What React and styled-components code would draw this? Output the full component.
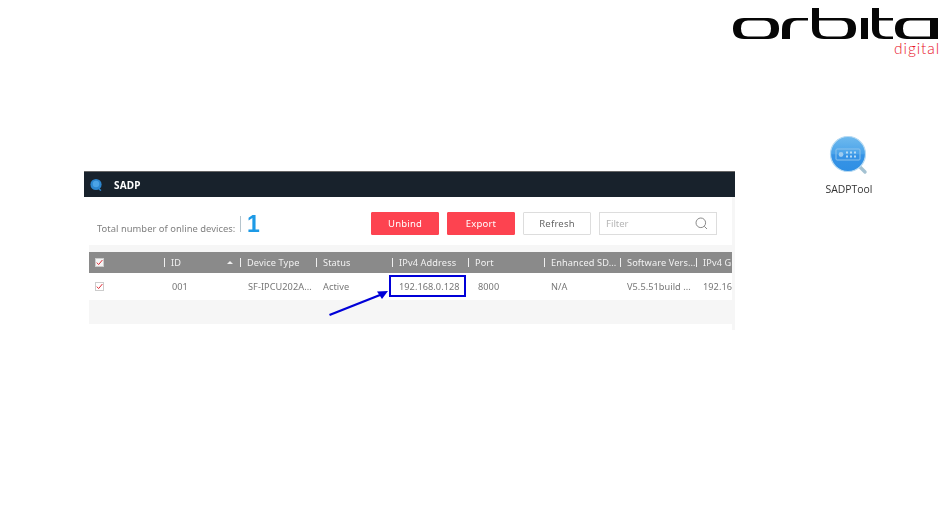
import React from "react";
import styled, { createGlobalStyle } from "styled-components";

const Global = createGlobalStyle`
  html, body { margin: 0; padding: 0; background: #fff; }
  body { font-family: "Noto Sans", "Open Sans", sans-serif; }
`;

const Page = styled.div`
  width: 950px;
  height: 527px;
  overflow: hidden;
  display: flex;
  flex-direction: column;
  background: #fff;
`;
const Header = styled.header`
  height: 135px;
  box-sizing: border-box;
  padding: 5px 10px 0 0;
  display: flex;
  justify-content: flex-end;
  align-items: flex-start;
`;
const Brand = styled.div`
  width: 210px;
  display: flex;
  flex-direction: column;
  align-items: flex-end;
`;
const Digital = styled.span`
  font-family: "Lato", sans-serif;
  font-weight: 300;
  font-size: 15.5px;
  line-height: 16px;
  letter-spacing: 0.9px;
  color: #e8101f;
  margin-top: -1px;
`;
const Main = styled.main`
  display: flex;
  align-items: flex-start;
  padding-left: 84px;
`;
const Panel = styled.section`
  position: relative;
  width: 651px;
  height: 159px;
  margin-top: 36px;
  background: #fff;
  display: flex;
  flex-direction: column;
`;
const Soft = styled.div`
  filter: blur(0.25px);
  display: flex;
  flex-direction: column;
  height: 100%;
`;
const TitleBar = styled.div`
  height: 26px;
  box-sizing: border-box;
  background: #18222c;
  border-top: 1px solid #666;
  display: flex;
  align-items: center;
  padding-left: 6px;
  gap: 12px;
`;
const Title = styled.span`
  color: #fff;
  font-family: "Noto Sans", sans-serif;
  font-weight: 700;
  font-size: 10px;
  letter-spacing: 0.2px;
`;
const Toolbar = styled.div`
  height: 48px;
  box-sizing: border-box;
  padding: 15px 18px 0 13px;
  display: flex;
  align-items: flex-start;
`;
const Total = styled.div`
  display: flex;
  align-items: flex-start;
  width: 274px;
`;
const TotalLabel = styled.span`
  font-size: 9.4px;
  line-height: 14px;
  letter-spacing: 0.03px;
  color: #808080;
  margin-top: 10px;
  white-space: nowrap;
  width: 143px;
`;
const Count = styled.span`
  border-left: 1px solid #b5c4cc;
  height: 16px;
  margin-top: 4px;
  padding-left: 6px;
  font-family: "Liberation Sans", sans-serif;
  font-weight: 700;
  font-size: 23px;
  line-height: 16px;
  color: #1d9ae6;
`;
const Actions = styled.div`
  display: flex;
  gap: 8px;
`;
const Button = styled.div`
  width: 68px;
  height: 23px;
  box-sizing: border-box;
  border-radius: 1px;
  display: flex;
  align-items: center;
  justify-content: center;
  font-size: 9.5px;
  letter-spacing: 0.2px;
  background: ${(p) => (p.$primary ? "#fd4350" : "#fff")};
  color: ${(p) => (p.$primary ? "#fff" : "#666")};
  border: 1px solid ${(p) => (p.$primary ? "#fd4350" : "#ddd")};
`;
const Filter = styled.div`
  width: 118px;
  height: 23px;
  box-sizing: border-box;
  border: 1px solid #ddd;
  display: flex;
  align-items: center;
  justify-content: space-between;
  padding: 0 8px 0 6px;
  font-size: 9.5px;
  color: #b5b5b5;
`;
const TableWrap = styled.div`
  margin-left: 5px;
  width: 644px;
  display: flex;
  flex-direction: column;
  background: #f6f6f6;
  height: 79px;
  overflow: hidden;
`;
const Row = styled.div`
  display: grid;
  grid-template-columns: 75px repeat(8, 76px);
  flex: none;
  width: 683px;
  margin-top: ${(p) => (p.$head ? "7px" : "0")};
  height: ${(p) => (p.$head ? "21px" : "27px")};
  background: ${(p) => (p.$head ? "#8a8a8a" : "#fff")};
`;
const HeadCell = styled.div`
  display: flex;
  align-items: center;
  justify-content: space-between;
  white-space: nowrap;
  overflow: hidden;
  font-size: 9.2px;
  letter-spacing: 0.12px;
  color: #f2f2f2;
  padding: 0 0 0 7px;
  position: relative;
  &::before {
    content: "";
    display: block;
    position: absolute;
    left: 0;
    top: 6px;
    height: 9px;
    width: 1px;
    background: #efefef;
  }
`;
const CheckCell = styled.div`
  display: flex;
  align-items: center;
`;
const Cell = styled.div`
  display: flex;
  align-items: center;
  white-space: nowrap;
  overflow: hidden;
  font-size: 9.2px;
  letter-spacing: 0.05px;
  color: #777;
  padding-left: ${(p) => p.$inset ?? 8}px;
`;
const Check = styled.span`
  width: 9px;
  height: 9px;
  margin-left: 6px;
  box-sizing: border-box;
  background: ${(p) => (p.$head ? "#f4f4f4" : "#fff")};
  border: 1px solid #ccc;
  display: flex;
  align-items: center;
  justify-content: center;
`;
const SortArrow = styled.span`
  width: 0;
  height: 0;
  margin-right: 7px;
  border-left: 3px solid transparent;
  border-right: 3px solid transparent;
  border-bottom: 3px solid #eee;
`;
const Scroll = styled.div`
  position: absolute;
  right: 0;
  top: 26px;
  bottom: 0;
  width: 3px;
  background: #f6f6f6;
`;
const Highlight = styled.div`
  position: absolute;
  left: 305px;
  top: 104px;
  width: 77px;
  height: 22px;
  box-sizing: border-box;
  border: 2px solid #0000d8;
`;
const Arrow = styled.svg`
  position: absolute;
  left: 240px;
  top: 110px;
`;
const Shortcut = styled.div`
  width: 60px;
  margin-left: 84px;
  display: flex;
  flex-direction: column;
  align-items: center;
  gap: 8px;
`;
const ShortcutLabel = styled.span`
  font-family: "Open Sans", sans-serif;
  font-size: 10.4px;
  line-height: 13px;
  color: #333;
  filter: blur(0.2px);
`;

const LogoMark = () => (
  <svg width="210" height="36" viewBox="730 5 210 36" aria-label="orbita">
    <g fill="#060606" fillRule="evenodd">
      <path d="M744 18H768Q779 18 779 28.5Q779 39 768 39H744Q733 39 733 28.5Q733 18 744 18ZM748 20.5Q741 20.5 741 28.5Q741 36.5 748 36.5H764Q771 36.5 771 28.5Q771 20.5 764 20.5Z" />
      <path d="M782 39V29Q782 18 794 18H808V20.5H797Q790 20.5 790 29V39Z" />
      <path d="M812 8H819V18H845Q856 18 856 28.5Q856 39 845 39H824Q812 39 812 28ZM819 20.5V29Q819 36.5 827 36.5H841Q848 36.5 848 28.5Q848 20.5 841 20.5Z" />
      <rect x="861" y="18" width="7" height="21" />
      <path d="M872 8H879V18H893V20.5H879V30Q879 36.5 886 36.5H893V39H884Q872 39 872 29Z" />
      <path d="M938 18V39H907Q895 39 895 28.5Q895 18 907 18ZM930 20.5H910Q903 20.5 903 28.5Q903 36.5 910 36.5H930Z" />
    </g>
  </svg>
);

const AppIcon = () => (
  <svg width="40" height="40" viewBox="0 0 40 40">
    <defs>
      <linearGradient id="lens" x1="0" y1="0" x2="0" y2="1">
        <stop offset="0" stopColor="#6fbaee" />
        <stop offset="0.5" stopColor="#4aa3ea" />
        <stop offset="0.52" stopColor="#3794e6" />
        <stop offset="1" stopColor="#2f8fe4" />
      </linearGradient>
    </defs>
    <path d="M30 31L36 37" stroke="#a4c2d2" strokeWidth="3.4" strokeLinecap="round" />
    <circle cx="19" cy="19" r="17.5" fill="url(#lens)" stroke="#b7daf2" strokeWidth="1.2" />
    <rect x="7" y="14" width="24" height="11" rx="1" fill="none" stroke="#8cc2ec" strokeWidth="1" />
    <circle cx="12" cy="19.5" r="2.4" fill="#9ccbf0" />
    <path d="M17 17.5h2M21 17.5h2M25 17.5h2M17 21.5h2M21 21.5h2M25 21.5h2" stroke="#b7dbf5" strokeWidth="2" />
  </svg>
);

const SmallLogo = () => (
  <svg width="12" height="13" viewBox="0 0 12 13">
    <circle cx="6" cy="6.5" r="5.6" fill="#2c86cf" />
    <path d="M9 11L11 12.5" stroke="#2c86cf" strokeWidth="1.5" />
    <circle cx="6" cy="6" r="3.2" fill="#4ba3e6" />
  </svg>
);

const Tick = () => (
  <svg width="7" height="7" viewBox="0 0 7 7">
    <path d="M.8 3.6L2.6 5.6L6.4 1" fill="none" stroke="#e0303a" strokeWidth="1" />
  </svg>
);

const Search = () => (
  <svg width="13" height="13" viewBox="0 0 13 13">
    <circle cx="5.8" cy="5.8" r="4.8" fill="none" stroke="#7d7d7d" strokeWidth="0.9" />
    <path d="M9.3 9.3L12 12" stroke="#7d7d7d" strokeWidth="0.9" />
  </svg>
);

const heads = ["ID", "Device Type", "Status", "IPv4 Address", "Port", "Enhanced SD...", "Software Vers...", "IPv4 Gateway"];
const cells = [
  { t: "001" },
  { t: "SF-IPCU202A..." },
  { t: "Active", inset: 7 },
  { t: "192.168.0.128", inset: 7 },
  { t: "8000", inset: 10 },
  { t: "N/A", inset: 7 },
  { t: "V5.5.51build ...", inset: 7 },
  { t: "192.168.0.1", inset: 7 },
];

export default function App() {
  return (
    <Page>
      <Global />
      <Header>
        <Brand>
          <LogoMark />
          <Digital>digital</Digital>
        </Brand>
      </Header>
      <Main>
        <Panel>
          <Soft>
            <TitleBar>
              <SmallLogo />
              <Title>SADP</Title>
            </TitleBar>
            <Toolbar>
              <Total>
                <TotalLabel>Total number of online devices:</TotalLabel>
                <Count>1</Count>
              </Total>
              <Actions>
                <Button $primary>Unbind</Button>
                <Button $primary>Export</Button>
                <Button>Refresh</Button>
                <Filter>
                  Filter
                  <Search />
                </Filter>
              </Actions>
            </Toolbar>
            <TableWrap>
              <Row $head>
                <CheckCell>
                  <Check $head>
                    <Tick />
                  </Check>
                </CheckCell>
                {heads.map((h, i) => (
                  <HeadCell key={h}>
                    {h}
                    {i === 0 && <SortArrow />}
                  </HeadCell>
                ))}
              </Row>
              <Row>
                <CheckCell>
                  <Check>
                    <Tick />
                  </Check>
                </CheckCell>
                {cells.map((c) => (
                  <Cell key={c.t} $inset={c.inset}>
                    {c.t}
                  </Cell>
                ))}
              </Row>
            </TableWrap>
            <Scroll />
          </Soft>
          <Highlight />
          <Arrow width="70" height="40" viewBox="0 0 70 40">
            <path d="M5.5 34L56 14" stroke="#0000d8" strokeWidth="2.4" fill="none" />
            <path d="M64 10L53 10.5L58 18Z" fill="#0000d8" />
          </Arrow>
        </Panel>
        <Shortcut>
          <AppIcon />
          <ShortcutLabel>SADPTool</ShortcutLabel>
        </Shortcut>
      </Main>
    </Page>
  );
}
